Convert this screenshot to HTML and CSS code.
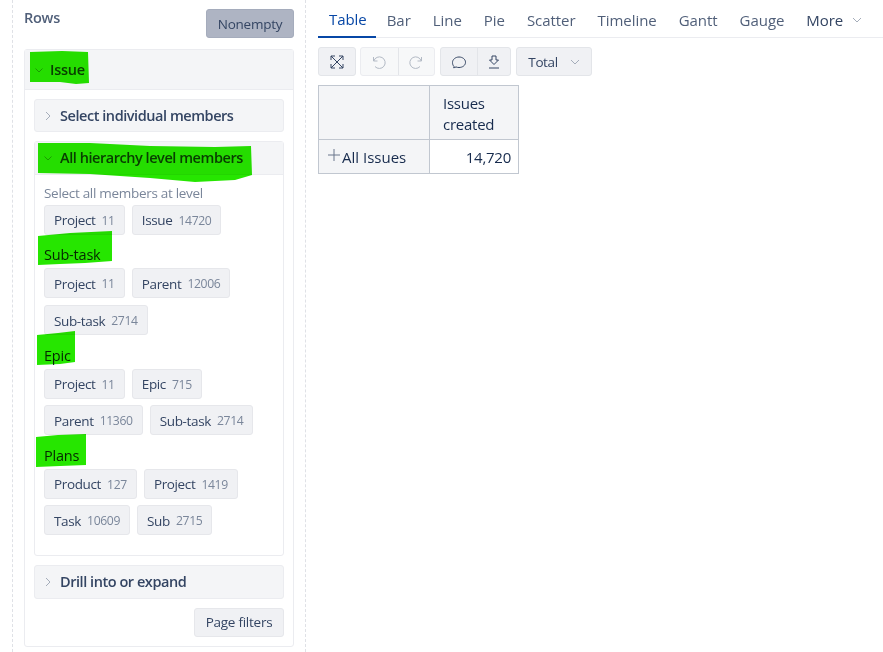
FILE: index.html
```html
<!DOCTYPE html>
<html lang="en">
<head>
<meta charset="utf-8">
<title>Report</title>
<link rel="stylesheet" href="styles.css">
</head>
<body>
<div class="app">
  <aside class="side">
    <div class="side-head">
      <span class="side-title">Rows</span>
      <button class="nonempty">Nonempty</button>
    </div>
    <section class="panel">
      <div class="panel-head">
        <svg class="chev" viewBox="0 0 10 10"><path d="M1.500 3.500 5 7l3.500-3.500"/></svg>
        <span class="panel-title">Issue</span>
      </div>
      <div class="panel-body">
        <div class="acc acc-closed">
          <svg class="chev" viewBox="0 0 10 10"><path d="M3 1l4 4-4 4"/></svg>
          <span class="acc-title">Select individual members</span>
        </div>
        <div class="acc-open">
          <div class="acc acc-top">
            <svg class="chev" viewBox="0 0 10 10"><path d="M1.500 3.500 5 7l3.500-3.500"/></svg>
            <span class="acc-title">All hierarchy level members</span>
          </div>
          <div class="acc-body">
            <div class="lvl lvl-first">Select all members at level</div>
            <div class="chips">
              <span class="chip">Project <i>11</i></span><span class="chip">Issue <i>14720</i></span>
            </div>
            <div class="lvl lvl-dark">Sub-task</div>
            <div class="chips">
              <span class="chip">Project <i>11</i></span><span class="chip">Parent <i>12006</i></span><span class="chip">Sub-task <i>2714</i></span>
            </div>
            <div class="lvl lvl-dark">Epic</div>
            <div class="chips">
              <span class="chip">Project <i>11</i></span><span class="chip">Epic <i>715</i></span><span class="chip">Parent <i>11360</i></span><span class="chip">Sub-task <i>2714</i></span>
            </div>
            <div class="lvl lvl-dark">Plans</div>
            <div class="chips">
              <span class="chip">Product <i>127</i></span><span class="chip">Project <i>1419</i></span><span class="chip">Task <i>10609</i></span><span class="chip">Sub <i>2715</i></span>
            </div>
          </div>
        </div>
        <div class="acc acc-closed acc-drill">
          <svg class="chev" viewBox="0 0 10 10"><path d="M3 1l4 4-4 4"/></svg>
          <span class="acc-title">Drill into or expand</span>
        </div>
        <div class="panel-foot"><button class="btn">Page filters</button></div>
      </div>
    </section>
  </aside>
  <main class="main">
    <nav class="tabs">
      <a class="tab active">Table</a><a class="tab">Bar</a><a class="tab">Line</a><a class="tab">Pie</a><a class="tab">Scatter</a><a class="tab">Timeline</a><a class="tab">Gantt</a><a class="tab">Gauge</a><a class="tab more">More <svg class="chev" viewBox="0 0 10 10"><path d="M1 3l4 4 4-4"/></svg></a>
    </nav>
    <div class="toolbar">
      <div class="group">
        <button class="tool"><svg viewBox="0 0 16 16" class="ico"><path d="M2 2l12 12M14 2 2 14M2 6V2h4M10 2h4v4M2 10v4h4M14 10v4h-4"/></svg></button>
      </div>
      <div class="group disabled">
        <button class="tool"><svg viewBox="0 0 16 16" class="ico"><path d="M2.500 3v4h4M2.800 7A5.800 5.800 0 1 1 4 12.500"/></svg></button>
        <button class="tool"><svg viewBox="0 0 16 16" class="ico"><path d="M13.500 3v4h-4M13.200 7A5.800 5.800 0 1 0 12 12.500"/></svg></button>
      </div>
      <div class="group group-share">
        <button class="tool"><svg viewBox="0 0 16 16" class="ico"><path d="M3 12.500c-1-1-1.500-2.300-1.500-4C1.500 5.500 4.500 3 8 3s6.500 2.200 6.500 5.300-3 5.200-6.500 5.200c-1.200 0-2.200-.2-3-.6-.7.500-1.500.8-2.500.8.300-.3.500-.7.500-1.200z"/></svg></button>
        <button class="tool"><svg viewBox="0 0 16 16" class="ico"><path d="M6 2h4v4h2.500L8 10.500 3.500 6H6zM3 14h10"/></svg></button>
      </div>
      <button class="total">Total <svg class="chev" viewBox="0 0 10 10"><path d="M1 3l4 4 4-4"/></svg></button>
    </div>
    <table class="grid">
      <tr><th class="corner"></th><th class="measure">Issues<br>created</th></tr>
      <tr><th class="row-head"><span class="row-label"><svg class="plus" viewBox="0 0 12 12"><path d="M6 0v12M0 6h12"/></svg>All Issues</span></th><td class="num">14,720</td></tr>
    </table>
  </main>
</div>
<svg class="paint" viewBox="0 0 883 652" width="883" height="652">
  <path d="M30 52 62 51 88 52 89 83 76 84 60 82 30 82z"/>
  <path d="M38 143 90 143 150 146 215 147 251 146 252 175 235 180 195 182 150 178 90 174 38 173z"/>
  <path d="M38 236 70 233 112 231 112 261 85 263 60 264 38 265z"/>
  <path d="M37 335 58 333 75 331 75 362 60 364 37 365z"/>
  <path d="M36 437 58 435 86 434 86 465 60 466 36 467z"/>
</svg>
</body>
</html>
```
FILE: styles.css
```css
* { box-sizing: border-box; }
html, body { margin: 0; padding: 0; background: #fff; }
body {
  width: 883px;
  height: 652px;
  overflow: hidden;
  position: relative;
  font-family: "Open Sans", "Noto Sans", sans-serif;
  font-size: 13.5px;
  letter-spacing: -0.25px;
  color: #344563;
}
button { font: inherit; letter-spacing: inherit; color: inherit; cursor: default; }
.app { display: flex; align-items: flex-start; height: 652px; }
.side {
  width: 294px;
  height: 652px;
  margin-left: 12px;
  padding: 0 11px;
  border-left: 1px dashed #dfe1e6;
  border-right: 1px dashed #dfe1e6;
  flex: none;
}
.side-head { display: flex; justify-content: space-between; align-items: flex-start; height: 49px; padding-top: 9px; }
.side-title { font-size: 14.500px; font-weight: 600; color: #505f79; line-height: 18px; }
.nonempty {
  width: 88px; height: 29px; padding: 0;
  background: #aeb4c3; border: 1px solid #a5acbc; border-radius: 3px;
  color: #344563;
}
.panel { border: 1px solid #ebecf0; border-radius: 3px; height: 598px; }
.panel-head {
  height: 40px; background: #f4f5f7; border-bottom: 1px solid #ebecf0;
  display: flex; align-items: center; padding-left: 9px; gap: 6px;
}
.panel-title { font-size: 14.500px; font-weight: 600; color: #344563; }
.chev { width: 10px; height: 10px; fill: none; stroke: #a5adba; stroke-width: 1; flex: none; }
.panel-body { padding: 9px 9px 0; }
.acc {
  background: #f4f5f7; display: flex; align-items: center; gap: 7px; padding-left: 8px;
  color: #344563;
}
.acc-closed { height: 33px; border: 1px solid #ebecf0; border-radius: 3px; }
.acc-drill { height: 34px; padding-bottom: 1px; }
.acc-title { font-size: 14.500px; font-weight: 600; letter-spacing: -0.45px; }
.acc-open { margin: 9px 0; border: 1px solid #ebecf0; border-radius: 3px; height: 415px; }
.acc-top { height: 33px; border-bottom: 1px solid #ebecf0; padding-bottom: 1px; }
.acc-body { padding: 10px 9px 0; }
.lvl-first { color: #7a869a; height: 19.900px; line-height: 16px; letter-spacing: -0.3px; }
.lvl-dark { color: #172b4d; height: 20px; line-height: 20px; margin: 10.500px 0 3px; font-size: 14.500px; letter-spacing: -0.2px; }
.chips { display: flex; flex-wrap: wrap; gap: 6.700px 7px; }
.chip {
  height: 30px; padding: 1px 9px 0; display: inline-flex; align-items: center; gap: 6px;
  background: #f0f1f4; border: 1px solid #e6e7eb; border-radius: 3px; white-space: nowrap;
  letter-spacing: -0.36px;
}
.chip i { font-style: normal; color: #7a869a; font-size: 12.200px; }
.panel-foot { display: flex; justify-content: flex-end; }
.btn {
  height: 29px; width: 90px; padding: 0 0 2px; margin-top: 9px;
  background: #f0f1f4; border: 1px solid #e6e7eb; border-radius: 3px;
}
.main { flex: 1; padding-left: 12px; }
.tabs { display: flex; height: 38px; border-bottom: 1px solid #ebecf0; }
.tab {
  display: flex; align-items: center; gap: 9px; padding: 2px 11px 0; font-size: 15px; letter-spacing: -0.05px;
  color: #505f79; height: 38px;
}
.tab.active { color: #0747a6; border-bottom: 2px solid #0747a6; padding: 2px 9px 0 11px; }
.tab.more { color: #344563; }
.toolbar { display: flex; gap: 4px; margin-top: 9px; height: 29px; }
.group { display: flex; border: 1px solid #e3e5e9; border-radius: 3px; background: #f0f1f4; }
.tool { width: 36.500px; height: 27px; padding: 0; background: none; border: 0; display: flex; align-items: center; justify-content: center; }
.tool + .tool { border-left: 1px solid #e3e5e9; }
.group:first-child .tool { width: 36px; }
.group-share { margin-left: 1px; }
.group-share .tool { width: 36px; }
.group-share .tool + .tool { width: 33px; }
.ico { width: 16px; height: 16px; fill: none; stroke: #344563; stroke-width: 1; }
.disabled { background: #f7f8f9; border-color: #ebecf0; }
.disabled .ico { stroke: #b3bac5; }
.total {
  width: 76px; height: 29px; margin-left: 1px; padding: 0; background: #f0f1f4; border: 1px solid #e3e5e9; border-radius: 3px;
  display: flex; align-items: center; justify-content: center; gap: 12px; letter-spacing: -0.4px;
}
.grid { border-collapse: collapse; margin-top: 9px; font-size: 15px; color: #172b4d; }
.grid th, .grid td { border: 1px solid #c1c7d0; font-weight: 400; padding: 0; }
.corner, .measure, .row-head { background: #f4f5f7; }
.corner { width: 111px; }
.measure { width: 89px; height: 54px; text-align: left; padding: 2px 8px 0 13px !important; line-height: 21px; }
.row-head { height: 34px; text-align: left; padding-left: 9px !important; white-space: nowrap; letter-spacing: 0; }
.row-label { display: flex; align-items: center; gap: 2px; }
.plus { width: 12px; height: 12px; fill: none; stroke: #6b778c; stroke-width: 1; margin-top: -4px; }
.num { text-align: right; padding-right: 7px !important; }
.paint { position: absolute; left: 0; top: 0; pointer-events: none; mix-blend-mode: multiply; }
.paint path { fill: #26e600; }
```
